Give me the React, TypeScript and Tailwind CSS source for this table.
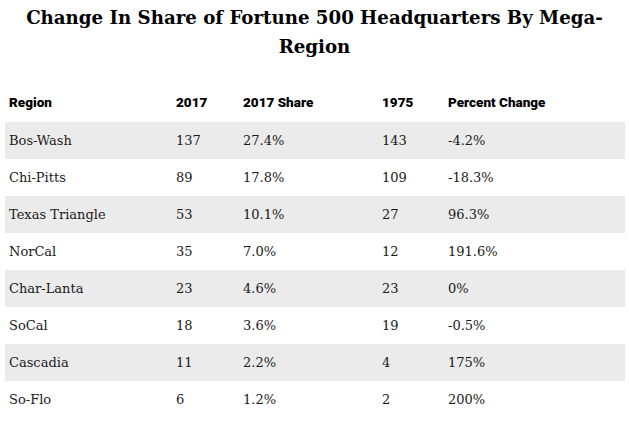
import React from "react";

const rows = [
  ["Bos-Wash", "137", "27.4%", "143", "-4.2%"],
  ["Chi-Pitts", "89", "17.8%", "109", "-18.3%"],
  ["Texas Triangle", "53", "10.1%", "27", "96.3%"],
  ["NorCal", "35", "7.0%", "12", "191.6%"],
  ["Char-Lanta", "23", "4.6%", "23", "0%"],
  ["SoCal", "18", "3.6%", "19", "-0.5%"],
  ["Cascadia", "11", "2.2%", "4", "175%"],
  ["So-Flo", "6", "1.2%", "2", "200%"],
];

const cols = "grid grid-cols-[167px_67px_139px_66px_181px]";

export default function App() {
  return (
    <div className="w-[629px] h-[425px] bg-white overflow-hidden text-[#1a1a1a]">
      <h1
        className="pt-[3px] text-center text-[18.2px] leading-[29px] font-bold text-black whitespace-nowrap"
        style={{ fontFamily: '"DejaVu Serif", Georgia, serif' }}
      >
        Change In Share of Fortune 500 Headquarters By Mega-
        <br />
        Region
      </h1>
      <div className="mx-[5px] mt-[24px] w-[620px]">
        <div
          className={`${cols} h-[37px] pb-[3px] items-center text-[13.5px] font-black text-black`}
          style={{ fontFamily: 'Roboto, sans-serif' }}
        >
          {["Region", "2017", "2017 Share", "1975", "Percent Change"].map((h) => (
            <div key={h} className="pl-[4px] whitespace-nowrap">
              {h}
            </div>
          ))}
        </div>
        {rows.map((r, i) => (
          <div
            key={r[0]}
            className={`${cols} h-[37px] items-center text-[13px] ${i % 2 === 0 ? "bg-[#ebebeb]" : "bg-white"}`}
            style={{ fontFamily: '"DejaVu Serif", Georgia, serif' }}
          >
            {r.map((c, j) => (
              <div key={j} className="pl-[4px]">
                {c}
              </div>
            ))}
          </div>
        ))}
      </div>
    </div>
  );
}
